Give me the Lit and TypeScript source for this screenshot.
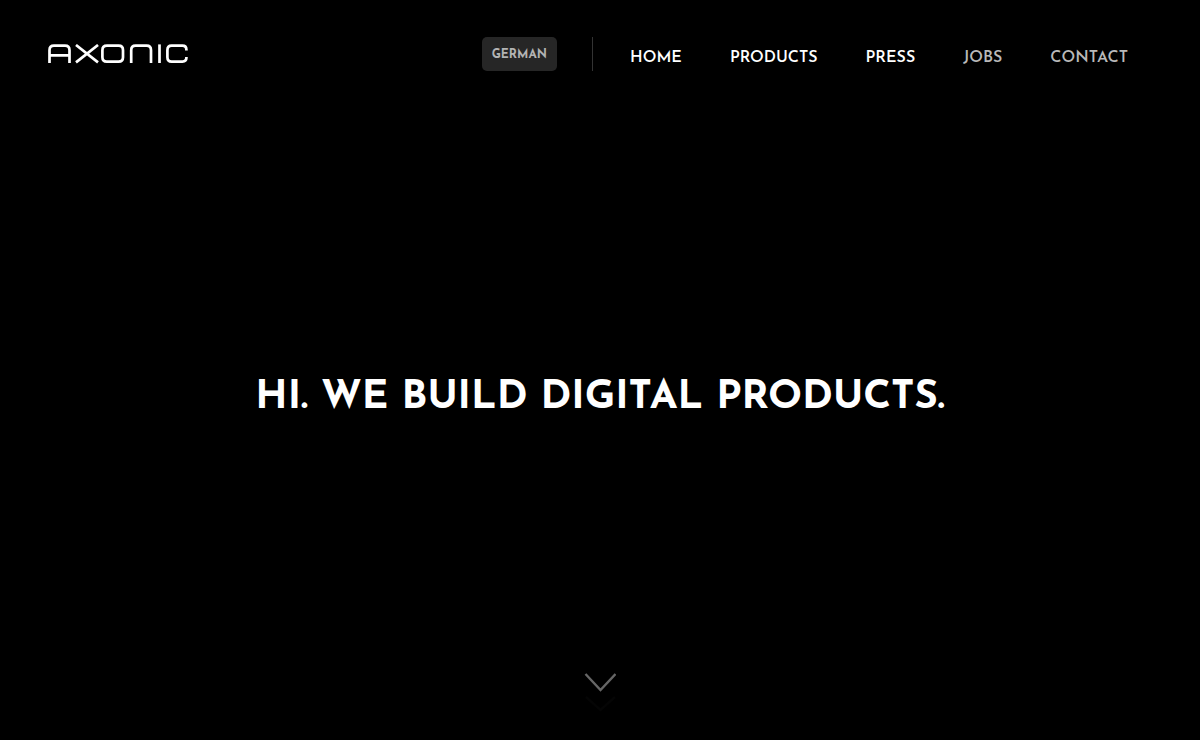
import { LitElement, html, css } from "lit";
import { customElement } from "lit/decorators.js";

@customElement("app-root")
export class AppRoot extends LitElement {
  static styles = css`
    :host {
      display: flex;
      flex-direction: column;
      min-height: 100vh;
      background: #000;
      color: #fff;
      font-family: "Josefin Sans", Lato, sans-serif;
    }
    a {
      color: inherit;
      text-decoration: none;
    }
    .header {
      display: flex;
      align-items: center;
      justify-content: space-between;
      padding: 37px 72px 37px 48px;
    }
    .logo,
    .logo svg,
    .next svg {
      display: block;
    }
    .menu {
      display: flex;
      align-items: center;
    }
    .language {
      box-sizing: border-box;
      height: 34px;
      padding: 2px 10px 0;
      border: 0;
      border-radius: 5px;
      background: #262626;
      color: #b3b3b3;
      font: 700 12px/32px "Josefin Sans", Lato, sans-serif;
      cursor: pointer;
    }
    .links {
      box-sizing: border-box;
      display: flex;
      gap: 48px;
      height: 34px;
      margin-left: 35px;
      padding: 6px 0 0 37px;
      border-left: 1px solid #333;
      font-size: 16px;
      font-weight: 600;
      line-height: 30px;
    }
    .muted {
      color: #b9b9b9;
    }
    .hero {
      flex: 1;
      display: flex;
      align-items: center;
      justify-content: center;
    }
    .title {
      margin: 0;
      padding-top: 16px;
      font-size: 40px;
      font-weight: 700;
      line-height: 52px;
      text-align: center;
    }
    .footer {
      display: flex;
      justify-content: center;
      padding-bottom: 28px;
    }
  `;

  render() {
    return html`
      <header class="header">
        <a class="logo" href="#home" aria-label="Axonic">
          <svg width="140" height="20" viewBox="0 0 140 20" fill="none" stroke="#fff" stroke-width="2.7">
            <path d="M1.5 19V6.2Q1.5 1.7 6 1.7H17Q21.5 1.7 21.5 6.2V19M1.5 11.4H21.5" />
            <path d="M28 1L50 18.4M50 1L28 18.4" />
            <path d="M59 1.7H70.6Q75 1.7 75 6.2V13.2Q75 17.6 70.6 17.6H58.8Q54.4 17.6 54.4 13.2V6.2Q54.4 1.7 59 1.7Z" />
            <path d="M83.2 19V6.2Q83.2 1.7 87.6 1.7H98.6Q103 1.7 103 6.2V19" />
            <path d="M111.5 0.4V19" />
            <path d="M138.4 6.6V5.7Q138.4 1.7 134.4 1.7H123.6Q119.4 1.7 119.4 6.2V13.2Q119.4 17.6 123.6 17.6H134.4Q138.4 17.6 138.4 13.8V13" />
          </svg>
        </a>
        <div class="menu">
          <button class="language" type="button">GERMAN</button>
          <nav class="links" aria-label="Main">
            <a href="#home">HOME</a>
            <a href="#products">PRODUCTS</a>
            <a href="#press">PRESS</a>
            <a class="muted" href="#jobs">JOBS</a>
            <a class="muted" href="#contact">CONTACT</a>
          </nav>
        </div>
      </header>
      <main class="hero">
        <h1 class="title">HI. WE BUILD DIGITAL PRODUCTS.</h1>
      </main>
      <footer class="footer">
        <a class="next" href="#products" aria-label="Next section">
          <svg width="32" height="40" viewBox="0 0 32 40" fill="none" stroke-width="2.4">
            <path d="M1.5 2L16.5 18L31.5 2" stroke="#666" />
            <path d="M2 25L16.5 38L31 25" stroke="#050505" />
          </svg>
        </a>
      </footer>
    `;
  }
}
